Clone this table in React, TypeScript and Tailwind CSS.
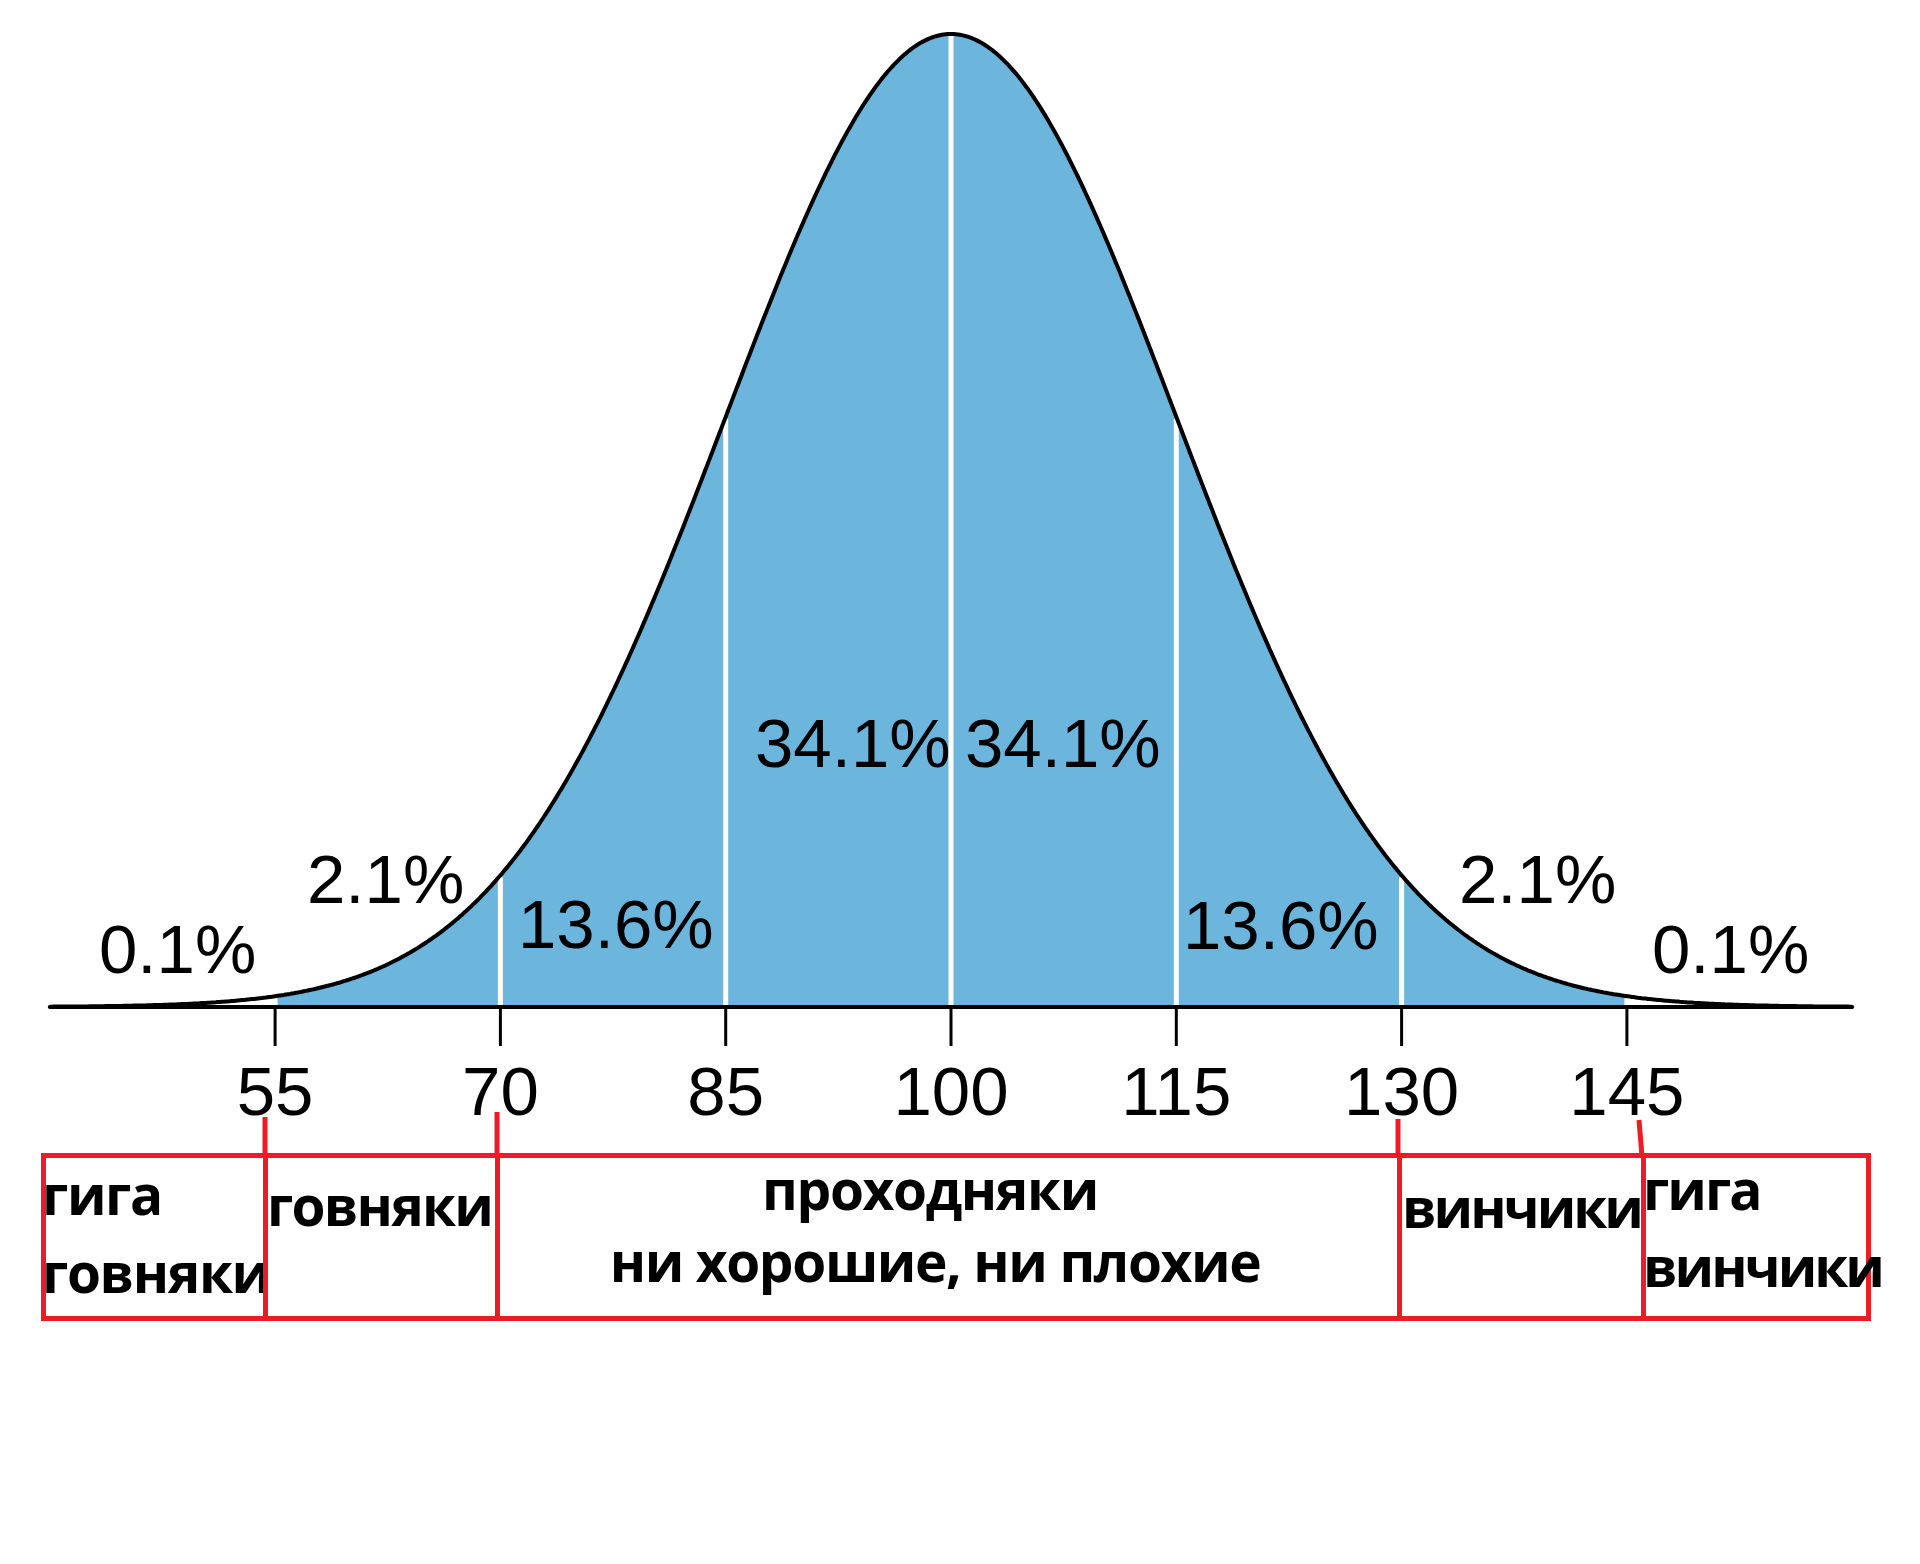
const MEAN = 951;
const SD = 225.3;
const AXIS_Y = 1007;
const PEAK = 973;
const RED = "#ed1c24";

function curveY(x: number) {
  const z = (x - MEAN) / SD;
  return AXIS_Y - PEAK * Math.exp(-(z * z) / 2);
}

function curvePoints(from: number, to: number) {
  const pts: string[] = [];
  for (let x = from; x < to; x += 2) pts.push(`${x.toFixed(1)},${curveY(x).toFixed(1)}`);
  pts.push(`${to.toFixed(1)},${curveY(to).toFixed(1)}`);
  return pts;
}

const ticks = [-3, -2, -1, 0, 1, 2, 3].map((k) => ({ x: MEAN + k * SD, label: String(100 + k * 15) }));

const percents = [
  { text: "0.1%", x: 99, y: 973 },
  { text: "2.1%", x: 307, y: 903 },
  { text: "13.6%", x: 518, y: 948 },
  { text: "34.1%", x: 755, y: 767 },
  { text: "34.1%", x: 965, y: 767 },
  { text: "13.6%", x: 1183, y: 949 },
  { text: "2.1%", x: 1459, y: 903 },
  { text: "0.1%", x: 1652, y: 973 },
];

function BellCurve() {
  const left = MEAN - 4 * SD;
  const right = MEAN + 4 * SD;
  const fillFrom = MEAN - 3 * SD;
  const fillTo = MEAN + 3 * SD;
  const line = "M" + curvePoints(left, right).join(" L");
  const area = `M${fillFrom.toFixed(1)},${AXIS_Y} L` + curvePoints(fillFrom, fillTo).join(" L") + ` L${fillTo.toFixed(1)},${AXIS_Y} Z`;

  return (
    <svg width="1920" height="1153" viewBox="0 0 1920 1153" className="block shrink-0">
      <path d={area} fill="#6cb5dd" />
      {ticks.map((t) => (
        <line key={"w" + t.label} x1={t.x} x2={t.x} y1={AXIS_Y} y2={curveY(t.x) + 2} stroke="#ffffff" strokeWidth="5" />
      ))}
      <path d={line} fill="none" stroke="#000" strokeWidth="4" strokeLinejoin="round" />
      <line x1={left} x2={right} y1={AXIS_Y} y2={AXIS_Y} stroke="#000" strokeWidth="4" strokeLinecap="round" />
      {ticks.map((t) => (
        <line key={"t" + t.label} x1={t.x} x2={t.x} y1={AXIS_Y} y2={1046} stroke="#000" strokeWidth="3" />
      ))}
      <g fontFamily="'Liberation Sans', Arial, sans-serif" fontSize="69" fontWeight="400" letterSpacing="0" fill="#000">
        {ticks.map((t) => (
          <text key={"l" + t.label} x={t.x} y={1115} textAnchor="middle">
            {t.label}
          </text>
        ))}
        {percents.map((p, i) => (
          <text key={"p" + i} x={p.x} y={p.y}>
            {p.text}
          </text>
        ))}
      </g>
      {/* hand-drawn red connectors from the ticks down to the boxes */}
      <g stroke={RED} strokeWidth="5" fill="none">
        <line x1="265" y1="1117" x2="265" y2="1156" />
        <line x1="497" y1="1112" x2="497" y2="1156" />
        <line x1="1398" y1="1119" x2="1398" y2="1156" />
        <line x1="1639" y1="1120" x2="1642" y2="1156" />
      </g>
    </svg>
  );
}

export default function App() {
  return (
    <main className="w-[1920px] h-[1564px] bg-white flex flex-col font-['Open_Sans',sans-serif] font-bold text-black text-[55px] overflow-hidden">
      <BellCurve />
      <div className="ml-[41px] w-[1830px] h-[168px] shrink-0 border-[5px] border-[#ed1c24] flex tracking-[-1.4px]">
        <div className="w-[217px] shrink-0 leading-[78px] whitespace-nowrap">
          <div className="-mt-[3px] -ml-[4px]">
            <div>гига</div>
            <div>говняки</div>
          </div>
        </div>
        <div className="w-[232px] shrink-0 border-l-[5px] border-[#ed1c24] leading-[78px] whitespace-nowrap pt-[8px]">
          <div className="-ml-[1px] tracking-[-1.8px]">говняки</div>
        </div>
        <div className="w-[902px] shrink-0 border-l-[5px] border-[#ed1c24] leading-[72px] whitespace-nowrap text-center">
          <div className="-mt-[5px] pr-[37px]">проходняки</div>
          <div className="pr-[27px]">ни хорошие, ни плохие</div>
        </div>
        <div className="w-[244px] shrink-0 border-l-[5px] border-[#ed1c24] leading-[78px] whitespace-nowrap pt-[10px]">
          <div className="tracking-[-3px]">винчики</div>
        </div>
        <div className="w-[225px] shrink-0 border-l-[5px] border-[#ed1c24] leading-[77px] whitespace-nowrap">
          <div className="-mt-[8px] -ml-[3px]">
            <div className="tracking-[-2px]">гига</div>
            <div className="tracking-[-3px]">винчики</div>
          </div>
        </div>
      </div>
    </main>
  );
}
